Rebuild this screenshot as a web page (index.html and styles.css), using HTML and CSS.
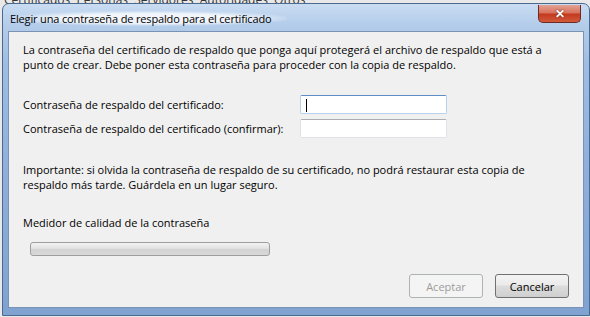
FILE: index.html
```html
<!DOCTYPE html>
<html lang="es">
<head>
  <meta charset="UTF-8" />
  <title>Elegir una contraseña de respaldo para el certificado</title>
  <link rel="stylesheet" href="styles.css">
</head>
<body>

<div class="fondo">Certificados&nbsp; Personas&nbsp; Servidores&nbsp; Autoridades&nbsp; Otros</div>

<div class="ventana">
  <div class="titulo">
    <span class="titulo-texto">Elegir una contraseña de respaldo para el certificado</span>
    <button class="cerrar">&#x2715;</button>
  </div>

  <div class="cliente">
    <p class="texto">La contraseña del certificado de respaldo que ponga aquí protegerá el archivo de respaldo que está a<br>punto de crear. Debe poner esta contraseña para proceder con la copia de respaldo.</p>

    <div class="campos">
      <label for="pass1">Contraseña de respaldo del certificado:</label>
      <div class="entrada foco" id="pass1"><span class="cursor"></span></div>
      <label for="pass2">Contraseña de respaldo del certificado (confirmar):</label>
      <div class="entrada" id="pass2"></div>
    </div>

    <p class="texto aviso">Importante: si olvida la contraseña de respaldo de su certificado, no podrá restaurar esta copia de<br>respaldo más tarde. Guárdela en un lugar seguro.</p>

    <p class="texto medidor-titulo">Medidor de calidad de la contraseña</p>
    <div class="medidor"></div>

    <div class="botones">
      <button class="btn" disabled>Aceptar</button>
      <button class="btn">Cancelar</button>
    </div>
  </div>
</div>

</body>
</html>
```

FILE: styles.css
```css
body {
  margin: 0;
  width: 590px;
  height: 317px;
  overflow: hidden;
  background-color: #e9e9e9;
  font-family: "Open Sans", Arial, sans-serif;
  font-size: 11px;
  color: #000;
  position: relative;
}
.fondo {
  position: absolute;
  top: -9px;
  left: 4px;
  font-size: 12px;
  color: #333;
  white-space: nowrap;
}
.ventana {
  position: relative;
  margin: 3px 0 0 2px;
  width: 588px;
  height: 313px;
  box-sizing: border-box;
  border: 1px solid #4b6a90;
  border-radius: 7px 7px 0 0;
  padding: 0 5px 7px 5px;
  display: flex;
  flex-direction: column;
  background: linear-gradient(180deg, #c9dcf2 0px, #b4cdea 20px, #9fbde2 60px, #8fb0da 160px, #7fa2d1 313px);
}
.titulo {
  height: 27px;
  display: flex;
  align-items: flex-start;
  justify-content: space-between;
}
.titulo-texto {
  margin: 7px 0 0 2px;
  font-size: 11px;
  letter-spacing: -0.15px;
  line-height: 15px;
  padding: 0 16px 0 0;
  border-radius: 8px;
  background: radial-gradient(ellipse at center, rgba(255,255,255,0.8) 45%, rgba(255,255,255,0) 75%);
}
.cerrar {
  margin: 1px 3px 0 0;
  width: 43px;
  height: 18px;
  border: 1px solid #6b2a22;
  border-top: none;
  border-radius: 0 0 5px 5px;
  background: linear-gradient(180deg, #e4a394 0%, #d8735f 45%, #c43a1f 55%, #d25a3c 100%);
  color: #fff;
  font-weight: bold;
  font-size: 12px;
  line-height: 16px;
  padding: 0;
  text-shadow: 0 0 2px #5a1a10;
}
.cliente {
  flex: 1;
  background-color: #f0f0f0;
  border: 1px solid #7a93b4;
  padding: 10px 0 0 14px;
  display: flex;
  flex-direction: column;
}
.texto {
  margin: 0;
  line-height: 15px;
  white-space: nowrap;
}
.campos {
  display: grid;
  grid-template-columns: 277px 147px;
  row-gap: 5px;
  align-items: center;
  margin-top: 23px;
}
.entrada {
  height: 19px;
  box-sizing: border-box;
  background: #fff;
  border: 1px solid #dfe3e8;
  border-top-color: #abadb3;
  border-radius: 2px;
  position: relative;
}
.entrada.foco {
  border-color: #b7d2ee;
  border-top-color: #5d8dc5;
}
.cursor {
  position: absolute;
  left: 5px;
  top: 3px;
  width: 1px;
  height: 13px;
  background: #000;
}
.aviso {
  margin-top: 24px;
}
.medidor-titulo {
  margin-top: 23px;
}
.medidor {
  margin: 12px 0 0 7px;
  width: 240px;
  height: 14px;
  box-sizing: border-box;
  border: 1px solid #9e9e9e;
  border-radius: 3px;
  background: linear-gradient(180deg, #f3f3f3 0%, #e2e2e2 45%, #d3d3d3 55%, #d9d9d9 100%);
}
.botones {
  display: flex;
  justify-content: flex-end;
  gap: 12px;
  margin: 18px 14px 0 0;
}
.btn {
  width: 74px;
  height: 24px;
  font-family: "Open Sans", Arial, sans-serif;
  font-size: 11px;
  border: 1px solid #707070;
  border-radius: 3px;
  background: linear-gradient(180deg, #f3f3f3 0%, #ebebeb 45%, #dddddd 50%, #cfcfcf 100%);
  color: #000;
  padding: 0;
}
.btn:disabled {
  border-color: #adb2b5;
  background: #f4f4f4;
  color: #9c9c9c;
}
```
